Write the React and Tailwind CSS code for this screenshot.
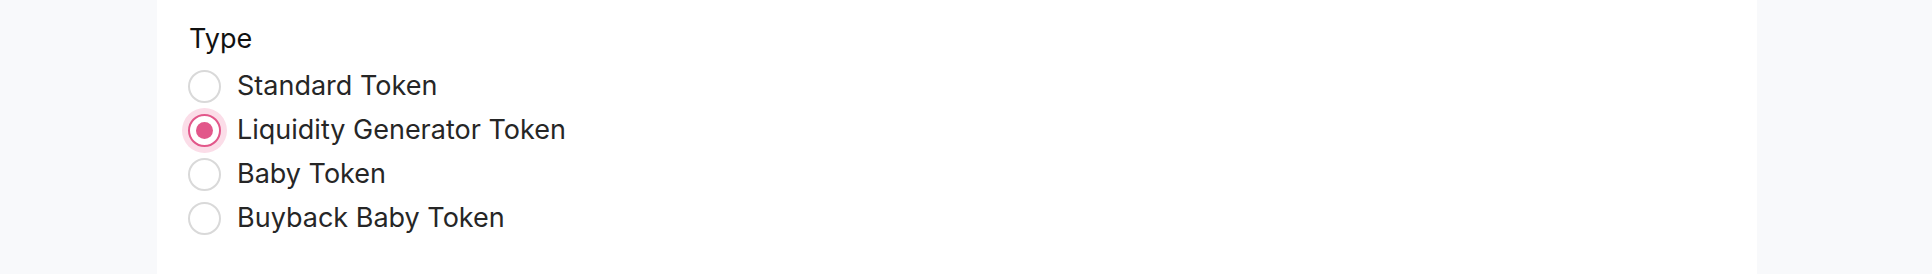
import { useState } from "react";

const TYPES = ["Standard Token", "Liquidity Generator Token", "Baby Token", "Buyback Baby Token"];

function Radio({ checked }) {
  return (
    <span
      className={
        "flex h-[33px] w-[33px] shrink-0 items-center justify-center rounded-full border-2 bg-white " +
        (checked ? "border-[#e2578a] ring-[6px] ring-[#fbdde8]" : "border-[#d9d9d9]")
      }
    >
      {checked && <span className="h-[17px] w-[17px] rounded-full bg-[#e2578a]" />}
    </span>
  );
}

export default function App() {
  const [selected, setSelected] = useState(1);

  return (
    <div className="flex h-[274px] w-full bg-[#f8f9fb] font-['Inter',sans-serif]">
      <div className="ml-[157px] w-[1600px] bg-white px-[31px] pt-[21px]">
        <p className="pl-[1px] text-[27px] leading-[36px] text-[#111]">Type</p>
        <div className="mt-[13px] flex flex-col gap-[11px]">
          {TYPES.map((t, i) => (
            <label
              key={t}
              onClick={() => setSelected(i)}
              className="flex h-[33px] cursor-pointer items-center gap-[16px] text-[27px] text-[#262626]"
            >
              <Radio checked={selected === i} />
              <span>{t}</span>
            </label>
          ))}
        </div>
      </div>
    </div>
  );
}
